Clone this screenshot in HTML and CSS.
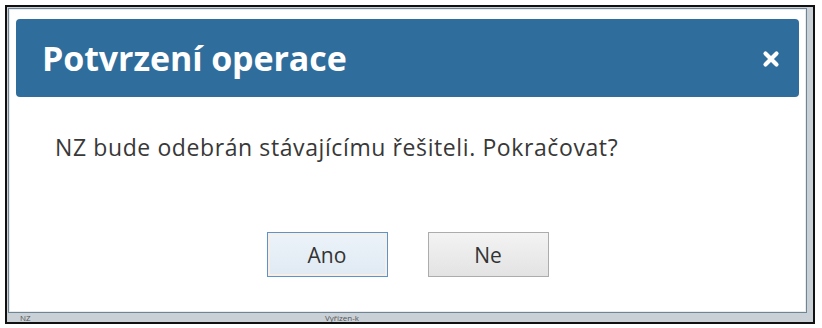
FILE: index.html
```html
<!DOCTYPE html>
<html lang="cs">
<head>
  <meta charset="UTF-8" />
  <title>Potvrzení operace</title>
  <link rel="stylesheet" href="styles.css">
</head>
<body>
  <div class="screen">
    <div class="dialog">
      <div class="dialog-header">
        <h1>Potvrzení operace</h1>
        <a href="#" class="close" title="Zavřít">
          <svg width="18" height="18" viewBox="0 0 18 18">
            <path d="M3.5 3.5 L14.5 14.5 M14.5 3.5 L3.5 14.5" stroke="#fff" stroke-width="4.2" stroke-linecap="round"/>
          </svg>
        </a>
      </div>
      <div class="dialog-body">
        <p>NZ bude odebrán stávajícímu řešiteli. Pokračovat?</p>
      </div>
      <div class="dialog-buttons">
        <button class="button focused">Ano</button>
        <button class="button">Ne</button>
      </div>
    </div>
    <div class="backdrop-row">
      <span class="cell-first">NZ</span>
      <span class="cell-second">Vyřízen-k</span>
    </div>
  </div>
</body>
</html>
```

FILE: styles.css
```css
body {
  margin: 0;
  padding: 5px 7px 4px 5px;
  background-color: #fff;
  font-family: "Open Sans", "Noto Sans", Arial, sans-serif;
}

.screen {
  box-sizing: border-box;
  height: 319px;
  border: 2px solid #111;
  background-color: #c9d0d6;
  padding: 1px 6px 0 1px;
  overflow: hidden;
}

.dialog {
  box-sizing: border-box;
  height: 305px;
  background-color: #fff;
  border: 1px solid #6f8594;
  box-shadow: inset 0 0 0 1px #e9ecef;
  padding: 10px 7px 6px 7px;
  display: flex;
  flex-direction: column;
}

.dialog-header {
  height: 78px;
  background-color: #2f6d9c;
  border-radius: 4px;
  display: flex;
  align-items: center;
  justify-content: space-between;
  padding: 0 19px 0 26px;
  flex-shrink: 0;
}

.dialog-header h1 {
  margin: 0;
  font-size: 34px;
  font-weight: bold;
  color: #fff;
  letter-spacing: -0.1px;
}

.close {
  display: flex;
  margin-top: 2px;
}

.dialog-body {
  padding: 0 39px;
}

.dialog-body p {
  margin: 35px 0 0 0;
  font-size: 23px;
  letter-spacing: 0.6px;
  line-height: 31px;
  color: #383838;
}

.dialog-buttons {
  display: flex;
  justify-content: center;
  gap: 40px;
  margin-top: 69px;
}

.button {
  width: 121px;
  height: 45px;
  font-family: "Open Sans", "Noto Sans", Arial, sans-serif;
  font-size: 21px;
  color: #333;
  border: 1px solid #acacac;
  background: linear-gradient(#f3f3f3, #e3e3e3);
  cursor: pointer;
}

.button.focused {
  border-color: #5b93cf;
  background: linear-gradient(#ecf3f9, #e0eaf3);
  box-shadow: inset 0 0 0 2px #f7efe6;
}

.backdrop-row {
  display: flex;
  font-size: 8px;
  color: #555;
  line-height: 9px;
  height: 9px;
}

.cell-first {
  margin-left: 12px;
  width: 305px;
}
```
